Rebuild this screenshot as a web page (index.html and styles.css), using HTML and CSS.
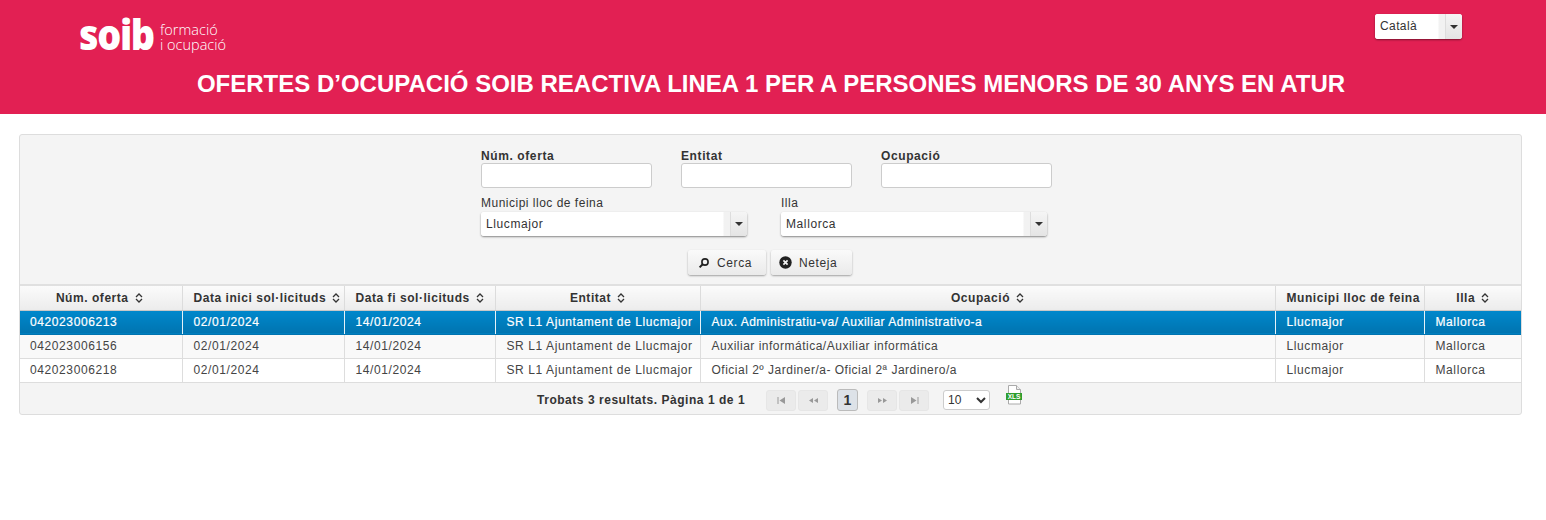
FILE: index.html
```html
<!DOCTYPE html>
<html lang="ca">
<head>
<meta charset="utf-8">
<title>Ofertes d'ocupació</title>
<link rel="stylesheet" href="styles.css">
</head>
<body>
<header class="hero">
  <div class="hero-top">
    <div class="logo">
      <span class="logo-main">soib</span>
      <span class="logo-sub">formació<br>i ocupació</span>
    </div>
    <div class="dd dd-lang"><span class="dd-label">Català</span><span class="dd-btn"><i class="caret"></i></span></div>
  </div>
  <h1 class="title">OFERTES D’OCUPACIÓ SOIB REACTIVA LINEA 1 PER A PERSONES MENORS DE 30 ANYS EN ATUR</h1>
</header>
<main class="main">
  <section class="panel">
    <form class="filters">
      <div class="filter-row">
        <label class="field field-text"><span class="lbl lbl-b">Núm. oferta</span><input class="inp" type="text"></label>
        <label class="field field-text"><span class="lbl lbl-b">Entitat</span><input class="inp" type="text"></label>
        <label class="field"><span class="lbl lbl-b">Ocupació</span><input class="inp" type="text"></label>
      </div>
      <div class="filter-row filter-row-2">
        <div class="field field-sel"><span class="lbl">Municipi lloc de feina</span><div class="dd dd-wide"><span class="dd-label">Llucmajor</span><span class="dd-btn"><i class="caret"></i></span></div></div>
        <div class="field"><span class="lbl">Illa</span><div class="dd dd-wide"><span class="dd-label">Mallorca</span><span class="dd-btn"><i class="caret"></i></span></div></div>
      </div>
      <div class="actions">
        <button type="button" class="btn btn-search"><svg class="ico" viewBox="0 0 12 12"><circle cx="7" cy="5" r="3.1" fill="none" stroke="#222" stroke-width="1.6"/><path d="M4.7 7.3 1.6 10.4" stroke="#222" stroke-width="2" fill="none"/></svg>Cerca</button>
        <button type="button" class="btn btn-clear"><svg class="ico ico-x" viewBox="0 0 13 13"><circle cx="6.5" cy="6.5" r="6.2" fill="#222"/><path d="M4.4 4.4l4.2 4.2M8.6 4.4l-4.2 4.2" stroke="#f4f4f4" stroke-width="1.7"/></svg>Neteja</button>
      </div>
    </form>
    <table class="grid">
      <colgroup><col class="c1"><col class="c2"><col class="c3"><col class="c4"><col class="c5"><col class="c6"><col class="c7"></colgroup>
      <thead>
        <tr>
          <th>Núm. oferta<svg class="sort" viewBox="0 0 8 10"><path d="M1 4 4 1l3 3M1 6l3 3 3-3" fill="none" stroke="#333" stroke-width="1.3"/></svg></th>
          <th>Data inici sol·licituds<svg class="sort" viewBox="0 0 8 10"><path d="M1 4 4 1l3 3M1 6l3 3 3-3" fill="none" stroke="#333" stroke-width="1.3"/></svg></th>
          <th>Data fi sol·licituds<svg class="sort" viewBox="0 0 8 10"><path d="M1 4 4 1l3 3M1 6l3 3 3-3" fill="none" stroke="#333" stroke-width="1.3"/></svg></th>
          <th>Entitat<svg class="sort" viewBox="0 0 8 10"><path d="M1 4 4 1l3 3M1 6l3 3 3-3" fill="none" stroke="#333" stroke-width="1.3"/></svg></th>
          <th>Ocupació<svg class="sort" viewBox="0 0 8 10"><path d="M1 4 4 1l3 3M1 6l3 3 3-3" fill="none" stroke="#333" stroke-width="1.3"/></svg></th>
          <th>Municipi lloc de feina</th>
          <th>Illa<svg class="sort" viewBox="0 0 8 10"><path d="M1 4 4 1l3 3M1 6l3 3 3-3" fill="none" stroke="#333" stroke-width="1.3"/></svg></th>
        </tr>
      </thead>
      <tbody>
        <tr class="sel"><td>042023006213</td><td>02/01/2024</td><td>14/01/2024</td><td>SR L1 Ajuntament de Llucmajor</td><td class="occ">Aux. Administratiu-va/ Auxiliar Administrativo-a</td><td>Llucmajor</td><td>Mallorca</td></tr>
        <tr class="alt"><td>042023006156</td><td>02/01/2024</td><td>14/01/2024</td><td>SR L1 Ajuntament de Llucmajor</td><td class="occ">Auxiliar informática/Auxiliar informática</td><td>Llucmajor</td><td>Mallorca</td></tr>
        <tr><td>042023006218</td><td>02/01/2024</td><td>14/01/2024</td><td>SR L1 Ajuntament de Llucmajor</td><td class="occ">Oficial 2º Jardiner/a- Oficial 2ª Jardinero/a</td><td>Llucmajor</td><td>Mallorca</td></tr>
      </tbody>
    </table>
    <div class="pager">
      <span class="pager-text">Trobats 3 resultats. Pàgina 1 de 1</span>
      <div class="pg-group pg-left">
        <span class="pg"><svg class="pg-ico" viewBox="0 0 9 7"><path d="M1 0v7" stroke="#999"/><path d="M8 0v7L2.500 3.500z" fill="#999"/></svg></span>
        <span class="pg"><svg class="pg-ico pg-ico-2" viewBox="0 0 11 7"><path d="M1 3.500 5 1v5zM6 3.500 10 1v5z" fill="#999"/></svg></span>
      </div>
      <span class="pg-cur">1</span>
      <div class="pg-group pg-right">
        <span class="pg"><svg class="pg-ico pg-ico-2" viewBox="0 0 11 7"><path d="M1 1l4 2.500L1 6zM6 1l4 2.500L6 6z" fill="#999"/></svg></span>
        <span class="pg"><svg class="pg-ico" viewBox="0 0 9 7"><path d="M8 0v7" stroke="#999"/><path d="M1 0v7l5.500-3.500z" fill="#999"/></svg></span>
      </div>
      <select class="rows"><option>10</option><option>20</option></select>
      <svg class="xls" viewBox="0 0 18 20">
        <path d="M3.500.5h8l4 4v14.500h-12z" fill="#fff" stroke="#aaa"/>
        <path d="M11.500.5v4h4" fill="#eee" stroke="#aaa"/>
        <rect x="1" y="8" width="16" height="7" fill="#2f9e2f"/>
        <text x="9" y="14" class="xls-t" text-anchor="middle">XLS</text>
      </svg>
    </div>
  </section>
</main>
</body>
</html>
```
FILE: styles.css
```css
* { box-sizing: border-box; }
html, body { margin: 0; padding: 0; background: #fff; }
body { font-family: "Liberation Sans", Arial, sans-serif; font-size: 12px; letter-spacing: .6px; color: #333; }

.hero { height: 114px; background: #e22053; color: #fff; }
.hero-top { display: flex; justify-content: space-between; height: 70px; padding: 14px 84px 0 79px; }
.logo { display: flex; align-items: flex-start; gap: 9px; letter-spacing: 0; }
.logo-main { display: block; width: 72px; font-family: "Open Sans", sans-serif; font-weight: 800; font-size: 42px; line-height: 42px; letter-spacing: -1.500px; margin-top: -1px; transform: scaleX(.9); transform-origin: left center; }
.logo-sub { font-family: "Open Sans", sans-serif; font-weight: 300; font-size: 14.500px; line-height: 15px; margin-top: 8px; }
.title { margin: 0; padding-right: 4px; text-align: center; font-size: 24px; line-height: 28px; font-weight: 700; letter-spacing: 0; }

.main { padding: 20px 24px 0 19px; }
.panel { border: 1px solid #ddd; border-radius: 3px; background: #f4f4f4; height: 281px; }

.filters { height: 149px; padding: 14px 0 0 461px; }
.filter-row { display: flex; }
.filter-row-2 { margin-top: 8px; }
.field { display: flex; flex-direction: column; }
.field-text { width: 200px; }
.field-sel { width: 300px; }
.lbl { height: 15px; line-height: 15px; font-size: 12px; letter-spacing: .5px; }
.lbl-b { font-weight: 700; height: 14px; letter-spacing: .6px; }
.inp { width: 171px; height: 25px; border: 1px solid #ccc; border-radius: 3px; background: #fff; padding: 0 4px; display: block; }

.dd { display: flex; background: #fff; border-radius: 3px; box-shadow: 0 1px 2px rgba(0,0,0,.45); color: #333; height: 24px; line-height: 24px; }
.dd-lang { width: 87px; height: 25px; line-height: 25px; letter-spacing: .4px; }
.dd-wide { width: 266px; margin-top: 1px; }
.dd-label { flex: 1; padding-left: 5px; border-radius: 3px 0 0 3px; background: linear-gradient(90deg, #fff calc(100% - 7px), #f2f2f2 calc(100% - 6px)); }
.dd-btn { width: 17px; border-left: 1px solid #ddd; background: linear-gradient(#f5f5f5, #e4e4e4); border-radius: 0 3px 3px 0; display: flex; align-items: center; justify-content: center; }
.caret { width: 0; height: 0; border: 4px solid transparent; border-top-color: #333; border-bottom: 0; }

.actions { display: flex; margin: 14px 0 0 207px; gap: 5px; }
.btn { height: 25px; border: 0; border-radius: 3px; background: linear-gradient(#fafafa, #eaeaea); box-shadow: 0 1px 2px rgba(0,0,0,.35); font: inherit; letter-spacing: .6px; color: #333; display: flex; align-items: center; padding: 0; }
.btn-search { width: 78px; padding-left: 10px; }
.btn-clear { width: 81px; padding-left: 8px; }
.ico { width: 12px; height: 12px; margin-right: 7px; }
.ico-x { width: 13px; height: 13px; margin-right: 7px; }

.grid { width: 1501px; border-collapse: collapse; table-layout: fixed; }
.c1 { width: 162px; } .c2 { width: 162px; } .c3 { width: 151px; } .c4 { width: 205px; } .c5 { width: 575px; } .c6 { width: 149px; } .c7 { width: 97px; }
.grid th { height: 25px; padding: 0 11px; border: 1px solid #dcdcdc; border-top: 2px solid #e0e0e0; border-bottom: 1px solid #c8c8c8; background: linear-gradient(#fbfbfb, #ececec); font-weight: 700; letter-spacing: .55px; text-align: center; color: #333; white-space: nowrap; }
.grid td { height: 24px; padding: 0 0 0 11px; border: 1px solid #ddd; white-space: nowrap; background: #fff; color: #444; }
.grid th:first-child { border-left: 0; padding: 0 13px 0 10px; }
.grid td:first-child { border-left: 0; padding-left: 10px; }
.grid th:last-child, .grid td:last-child { border-right: 0; }
.grid .occ { letter-spacing: .5px; }
.grid .alt td { background: #f9f9f9; }
.grid .sel td { background: linear-gradient(#0088cc, #0074b0); color: #fff; -webkit-text-stroke: .2px #fff; border-color: #0074b0 #e6f2f8; }
.sort { width: 8px; height: 10px; margin-left: 6px; vertical-align: -1px; }

.pager { display: flex; align-items: center; height: 33px; padding: 2px 0 0 517px; }
.pager-text { width: 229px; font-weight: 700; letter-spacing: .53px; }
.pg-group { display: flex; gap: 2px; }
.pg { width: 30px; height: 21px; border-radius: 3px; background: #ebebeb; border: 1px solid #e6e6e6; display: flex; align-items: center; justify-content: center; }
.pg-ico { width: 9px; height: 7px; }
.pg-ico-2 { width: 11px; }
.pg-cur { width: 21px; height: 22px; margin: 0 9px; border: 1px solid #bbb; border-radius: 3px; background: #dde2e8; text-align: center; line-height: 20px; font-weight: 700; font-size: 14px; letter-spacing: 0; }
.rows { width: 47px; height: 20px; margin-left: 14px; border: 1px solid #ccc; border-radius: 3px; background: #fff; font: inherit; letter-spacing: 0; color: #333; }
.xls { width: 18px; height: 20px; margin: -11px 0 0 15px; }
.xls-t { font-size: 6.500px; font-weight: 700; fill: #fff; letter-spacing: 0; }
```
